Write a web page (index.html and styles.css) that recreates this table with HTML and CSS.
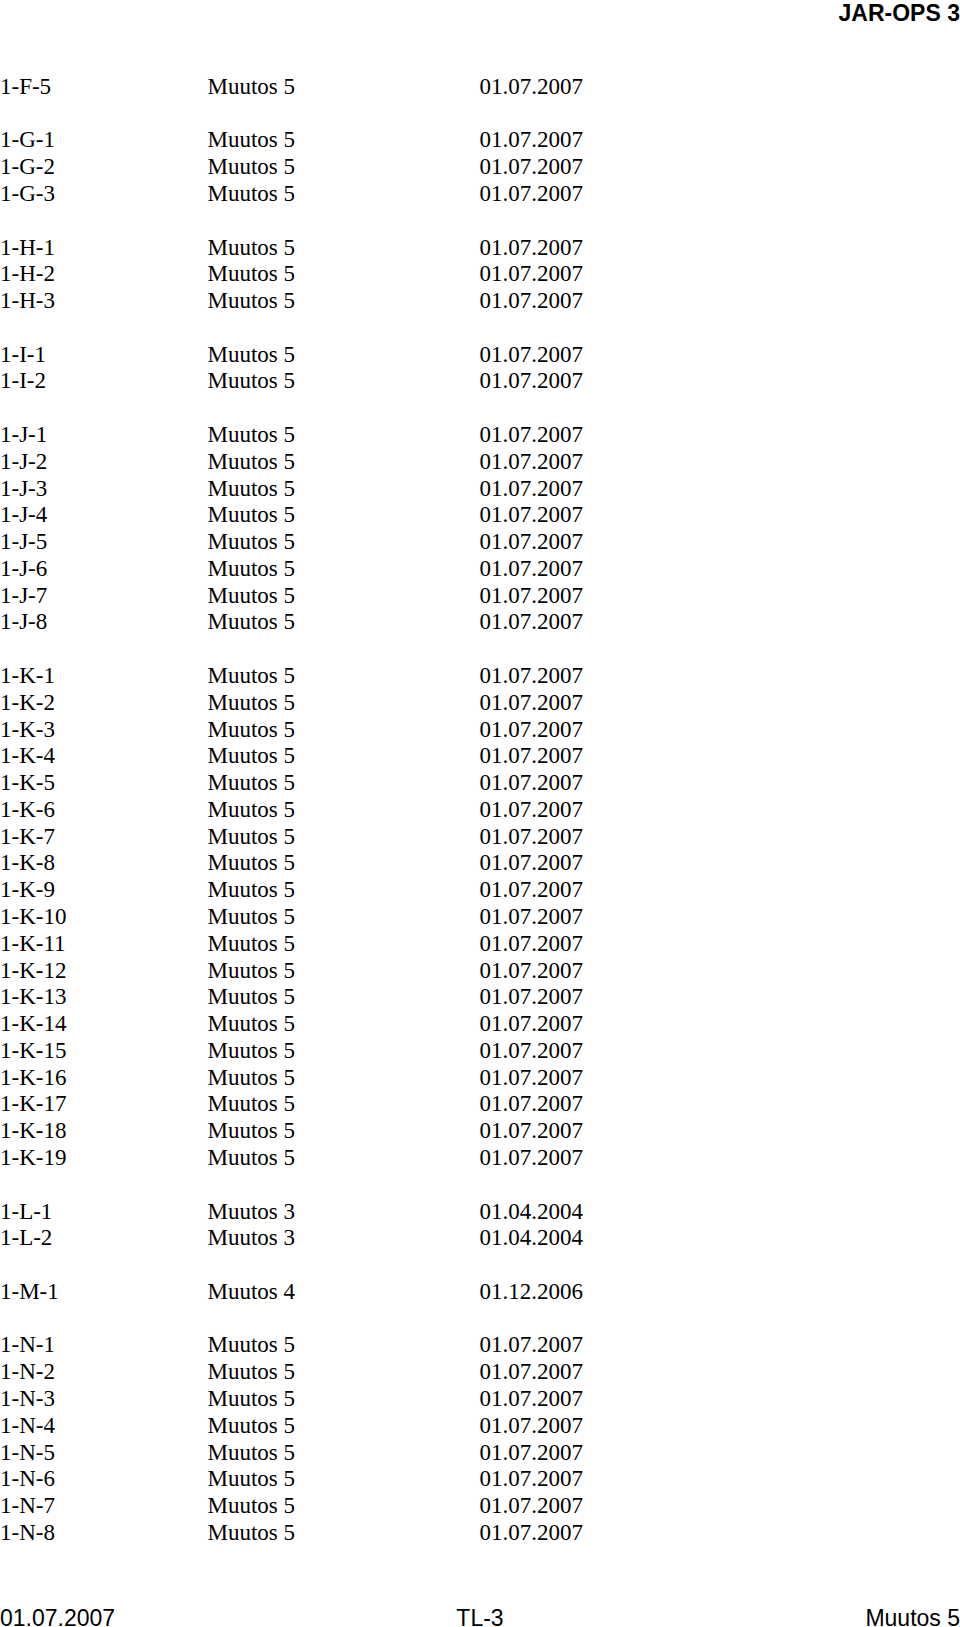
FILE: index.html
```html
<!DOCTYPE html>
<html lang="fi">
<head>
<meta charset="utf-8">
<title>JAR-OPS 3</title>
<link rel="stylesheet" href="styles.css">
</head>
<body>
<div class="page">
  <header class="head">JAR-OPS 3</header>
  <main class="list">
    <section class="group">
      <div class="row"><span>1-F-5</span><span>Muutos 5</span><span>01.07.2007</span></div>
    </section>
    <section class="group">
      <div class="row"><span>1-G-1</span><span>Muutos 5</span><span>01.07.2007</span></div>
      <div class="row"><span>1-G-2</span><span>Muutos 5</span><span>01.07.2007</span></div>
      <div class="row"><span>1-G-3</span><span>Muutos 5</span><span>01.07.2007</span></div>
    </section>
    <section class="group">
      <div class="row"><span>1-H-1</span><span>Muutos 5</span><span>01.07.2007</span></div>
      <div class="row"><span>1-H-2</span><span>Muutos 5</span><span>01.07.2007</span></div>
      <div class="row"><span>1-H-3</span><span>Muutos 5</span><span>01.07.2007</span></div>
    </section>
    <section class="group">
      <div class="row"><span>1-I-1</span><span>Muutos 5</span><span>01.07.2007</span></div>
      <div class="row"><span>1-I-2</span><span>Muutos 5</span><span>01.07.2007</span></div>
    </section>
    <section class="group">
      <div class="row"><span>1-J-1</span><span>Muutos 5</span><span>01.07.2007</span></div>
      <div class="row"><span>1-J-2</span><span>Muutos 5</span><span>01.07.2007</span></div>
      <div class="row"><span>1-J-3</span><span>Muutos 5</span><span>01.07.2007</span></div>
      <div class="row"><span>1-J-4</span><span>Muutos 5</span><span>01.07.2007</span></div>
      <div class="row"><span>1-J-5</span><span>Muutos 5</span><span>01.07.2007</span></div>
      <div class="row"><span>1-J-6</span><span>Muutos 5</span><span>01.07.2007</span></div>
      <div class="row"><span>1-J-7</span><span>Muutos 5</span><span>01.07.2007</span></div>
      <div class="row"><span>1-J-8</span><span>Muutos 5</span><span>01.07.2007</span></div>
    </section>
    <section class="group">
      <div class="row"><span>1-K-1</span><span>Muutos 5</span><span>01.07.2007</span></div>
      <div class="row"><span>1-K-2</span><span>Muutos 5</span><span>01.07.2007</span></div>
      <div class="row"><span>1-K-3</span><span>Muutos 5</span><span>01.07.2007</span></div>
      <div class="row"><span>1-K-4</span><span>Muutos 5</span><span>01.07.2007</span></div>
      <div class="row"><span>1-K-5</span><span>Muutos 5</span><span>01.07.2007</span></div>
      <div class="row"><span>1-K-6</span><span>Muutos 5</span><span>01.07.2007</span></div>
      <div class="row"><span>1-K-7</span><span>Muutos 5</span><span>01.07.2007</span></div>
      <div class="row"><span>1-K-8</span><span>Muutos 5</span><span>01.07.2007</span></div>
      <div class="row"><span>1-K-9</span><span>Muutos 5</span><span>01.07.2007</span></div>
      <div class="row"><span>1-K-10</span><span>Muutos 5</span><span>01.07.2007</span></div>
      <div class="row"><span>1-K-11</span><span>Muutos 5</span><span>01.07.2007</span></div>
      <div class="row"><span>1-K-12</span><span>Muutos 5</span><span>01.07.2007</span></div>
      <div class="row"><span>1-K-13</span><span>Muutos 5</span><span>01.07.2007</span></div>
      <div class="row"><span>1-K-14</span><span>Muutos 5</span><span>01.07.2007</span></div>
      <div class="row"><span>1-K-15</span><span>Muutos 5</span><span>01.07.2007</span></div>
      <div class="row"><span>1-K-16</span><span>Muutos 5</span><span>01.07.2007</span></div>
      <div class="row"><span>1-K-17</span><span>Muutos 5</span><span>01.07.2007</span></div>
      <div class="row"><span>1-K-18</span><span>Muutos 5</span><span>01.07.2007</span></div>
      <div class="row"><span>1-K-19</span><span>Muutos 5</span><span>01.07.2007</span></div>
    </section>
    <section class="group">
      <div class="row"><span>1-L-1</span><span>Muutos 3</span><span>01.04.2004</span></div>
      <div class="row"><span>1-L-2</span><span>Muutos 3</span><span>01.04.2004</span></div>
    </section>
    <section class="group">
      <div class="row"><span>1-M-1</span><span>Muutos 4</span><span>01.12.2006</span></div>
    </section>
    <section class="group">
      <div class="row"><span>1-N-1</span><span>Muutos 5</span><span>01.07.2007</span></div>
      <div class="row"><span>1-N-2</span><span>Muutos 5</span><span>01.07.2007</span></div>
      <div class="row"><span>1-N-3</span><span>Muutos 5</span><span>01.07.2007</span></div>
      <div class="row"><span>1-N-4</span><span>Muutos 5</span><span>01.07.2007</span></div>
      <div class="row"><span>1-N-5</span><span>Muutos 5</span><span>01.07.2007</span></div>
      <div class="row"><span>1-N-6</span><span>Muutos 5</span><span>01.07.2007</span></div>
      <div class="row"><span>1-N-7</span><span>Muutos 5</span><span>01.07.2007</span></div>
      <div class="row"><span>1-N-8</span><span>Muutos 5</span><span>01.07.2007</span></div>
    </section>
  </main>
  <footer class="foot">
    <span class="foot-left">01.07.2007</span>
    <span class="foot-center">TL-3</span>
    <span class="foot-right">Muutos 5</span>
  </footer>
</div>
</body>
</html>
```

FILE: styles.css
```css
html, body {
  margin: 0;
  padding: 0;
  background: #ffffff;
  overflow: hidden;
}

.page {
  width: 960px;
  height: 1627px;
  overflow: hidden;
  color: #000000;
}

.head {
  font-family: "Liberation Sans", Arial, sans-serif;
  font-weight: bold;
  font-size: 23px;
  line-height: 26px;
  text-align: right;
  margin-bottom: 47.85px;
}

.list {
  display: flex;
  flex-direction: column;
  gap: 26.78px;
  font-family: "Liberation Serif", "Times New Roman", serif;
  font-size: 23px;
  line-height: 26.78px;
}

.row {
  display: grid;
  grid-template-columns: 207.5px 272px auto;
  white-space: nowrap;
}

.foot {
  display: grid;
  grid-template-columns: 1fr auto 1fr;
  margin-top: 62px;
  font-family: "Liberation Sans", Arial, sans-serif;
  font-size: 23px;
  line-height: 18px;
}

.foot-left { text-align: left; }
.foot-center { text-align: center; }
.foot-right { text-align: right; }
```
